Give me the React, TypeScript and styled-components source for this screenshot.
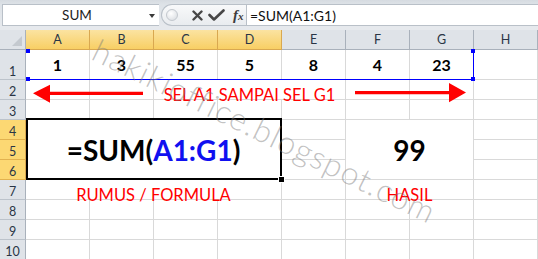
import React from 'react';
import styled, { createGlobalStyle, css } from 'styled-components';

const colunas = ['A', 'B', 'C', 'D', 'E', 'F', 'G', 'H'];
const linhas = [1, 2, 3, 4, 5, 6, 7, 8, 9, 10];
const valoresLinha1 = [1, 3, 55, 5, 8, 4, 23];

type Mesclada = {
  linha: number;
  col: number;
  linhas: number;
  cols: number;
  selecionada?: boolean;
  conteudo: React.ReactNode;
};

// criadas dentro de uma função porque os styled components ficam no fim do arquivo
function criarMescladas(): Mesclada[] {
  return [
    { linha: 2, col: 2, linhas: 1, cols: 3, conteudo: <TextoVermelho>SEL A1 SAMPAI SEL G1</TextoVermelho> },
    {
      linha: 4, col: 0, linhas: 3, cols: 4, selecionada: true,
      conteudo: <TextoGrande>=SUM(<Azul>A1:G1</Azul>)</TextoGrande>,
    },
    { linha: 4, col: 5, linhas: 3, cols: 2, conteudo: <TextoGrande>99</TextoGrande> },
    { linha: 7, col: 0, linhas: 1, cols: 4, conteudo: <TextoVermelho>RUMUS / FORMULA</TextoVermelho> },
    { linha: 7, col: 5, linhas: 1, cols: 2, conteudo: <TextoVermelho>HASIL</TextoVermelho> },
  ];
}

export default function App() {
  const mescladas = criarMescladas();

  function estaMesclada(linha: number, col: number) {
    return mescladas.some(
      (m) => linha >= m.linha && linha < m.linha + m.linhas && col >= m.col && col < m.col + m.cols
    );
  }

  const celulas: React.ReactNode[] = [];
  linhas.forEach((linha) => {
    colunas.forEach((_, col) => {
      if (estaMesclada(linha, col)) return;
      const valor = linha === 1 ? valoresLinha1[col] : undefined;
      celulas.push(
        <Celula key={`${linha}-${col}`} $linha={linha} $col={col}>
          {valor !== undefined && <Numero>{valor}</Numero>}
        </Celula>
      );
    });
  });

  return (
    <>
      <GlobalStyle />
      <Pagina>
        <BarraFormula>
          <CaixaNome>
            <TextoNome>SUM</TextoNome>
            <SetaNome />
          </CaixaNome>
          <Controles>
            <Alca />
            <Icone width="11" height="11" viewBox="0 0 11 11">
              <path d="M1.5 1.5 L9.5 9.5 M9.5 1.5 L1.5 9.5" stroke="#474747" strokeWidth="2.4" strokeLinecap="round" />
            </Icone>
            <Icone width="17" height="12" viewBox="0 0 17 12">
              <path d="M1.5 6 L6 10.5 L15.5 1.5" stroke="#474747" strokeWidth="2.6" fill="none" strokeLinecap="round" strokeLinejoin="round" />
            </Icone>
            <Fx>f<small>x</small></Fx>
          </Controles>
          <EntradaFormula>=SUM(A1:G1)</EntradaFormula>
        </BarraFormula>

        <Planilha>
          <Canto>
            <Triangulo />
          </Canto>
          {colunas.map((c, i) => (
            <CabecalhoColuna key={c} $col={i} $ativo={i < 4}>{c}</CabecalhoColuna>
          ))}
          {linhas.map((l) => (
            <CabecalhoLinha key={l} $linha={l} $ativo={l >= 4 && l <= 6}>{l}</CabecalhoLinha>
          ))}
          {celulas}
          {mescladas.map((m, i) => (
            <Celula
              key={`m${i}`}
              $linha={m.linha}
              $col={m.col}
              $linhas={m.linhas}
              $cols={m.cols}
              $selecionada={m.selecionada}
            >
              {m.conteudo}
            </Celula>
          ))}
        </Planilha>

        <Intervalo>
          <Marcador $v="top" $h="left" />
          <Marcador $v="top" $h="right" />
          <Marcador $v="bottom" $h="left" />
          <Marcador $v="bottom" $h="right" />
        </Intervalo>

        <Setas width="538" height="259" viewBox="0 0 538 259">
          <polygon points="33,93.3 50,84.8 50,91.8 143,91.8 143,95 50,95 50,102.8" fill="#ff0000" />
          <polygon points="355,91 449,91 449,83 466,92.6 449,102.2 449,94.2 355,94.2" fill="#ff0000" />
        </Setas>

        <MarcaDagua>hakikioffice.blogspot.com</MarcaDagua>
      </Pagina>
    </>
  );
}

const GlobalStyle = createGlobalStyle`
  html, body {
    margin: 0;
    padding: 0;
    background: #ffffff;
    overflow: hidden;
  }
  body {
    font-family: 'Lato', 'Open Sans', sans-serif;
  }
`;

const Pagina = styled.div`
  position: relative;
  width: 538px;
  height: 259px;
  overflow: hidden;
`;

const BarraFormula = styled.div`
  box-sizing: border-box;
  height: 30px;
  padding: 4px 0 4px 2px;
  display: flex;
  background: linear-gradient(#d6dbe1 0, #dde2e7 4px, #e6e9ed 26px);
`;

const CaixaNome = styled.div`
  width: 157px;
  box-sizing: border-box;
  display: flex;
  align-items: center;
  background: #ffffff;
  border: 1px solid #b9c0c8;
  border-right: none;
`;

const TextoNome = styled.span`
  flex: 1;
  text-align: center;
  font-family: 'Lato', sans-serif;
  font-size: 13.5px;
  color: #1c1c1c;
  padding-left: 2px;
`;

const SetaNome = styled.span`
  width: 0;
  height: 0;
  margin: 1px 4px 0 0;
  border-left: 3.5px solid transparent;
  border-right: 3.5px solid transparent;
  border-top: 4px solid #3a3a3a;
`;

const Controles = styled.div`
  margin-left: 2px;
  width: 85px;
  box-sizing: border-box;
  display: flex;
  align-items: center;
  background: linear-gradient(#f8f9fa, #e9ecef);
  border: 1px solid #b9c0c8;
  border-right: none;
  border-radius: 11px 0 0 11px;
`;

const Alca = styled.span`
  width: 10px;
  height: 10px;
  margin: 0 14px 0 4px;
  border-radius: 50%;
  border: 1px solid #c3c8ce;
  background: radial-gradient(circle at 40% 35%, #ffffff, #d5d9de);
`;

const Icone = styled.svg`
  display: block;
  margin-right: 5px;
`;

const Fx = styled.span`
  font-family: 'Liberation Serif', 'DejaVu Serif', serif;
  font-style: italic;
  font-weight: bold;
  font-size: 15px;
  color: #3d3d3d;
  margin-left: 3px;
  & small {
    font-size: 11px;
  }
`;

const EntradaFormula = styled.div`
  flex: 1;
  box-sizing: border-box;
  display: flex;
  align-items: center;
  padding-left: 3px;
  background: #ffffff;
  border: 1px solid #b9c0c8;
  border-right: none;
  font-family: 'Lato', sans-serif;
  font-size: 14px;
  color: #111111;
`;

const Planilha = styled.div`
  display: grid;
  grid-template-columns: 26px repeat(7, 64px) 1fr;
  grid-template-rows: 20px 30px repeat(9, 20px);
  width: 538px;
`;

const cabecalhoBase = css`
  box-sizing: border-box;
  display: flex;
  justify-content: center;
  font-family: 'Lato', sans-serif;
  font-size: 12.5px;
  color: #2a3545;
`;

const Canto = styled.div`
  grid-row: 1;
  grid-column: 1;
  position: relative;
  background: #dfe3e8;
  border-right: 1px solid #a9b1bb;
  border-bottom: 1px solid #a9b1bb;
`;

const Triangulo = styled.span`
  position: absolute;
  right: 3px;
  bottom: 3px;
  width: 0;
  height: 0;
  border-left: 10px solid transparent;
  border-bottom: 10px solid #c4c9cf;
`;

const CabecalhoColuna = styled.div<{ $col: number; $ativo: boolean }>`
  ${cabecalhoBase};
  grid-row: 1;
  grid-column: ${(p) => p.$col + 2};
  align-items: center;
  border-right: 1px solid ${(p) => (p.$ativo ? '#d9a850' : '#a9b1bb')};
  border-bottom: 1px solid ${(p) => (p.$ativo ? '#d9a850' : '#a9b1bb')};
  background: ${(p) => (p.$ativo ? 'linear-gradient(#fbe3a1, #f8cf64)' : '#dfe3e8')};
`;

const CabecalhoLinha = styled.div<{ $linha: number; $ativo: boolean }>`
  ${cabecalhoBase};
  grid-column: 1;
  grid-row: ${(p) => p.$linha + 1};
  align-items: flex-end;
  line-height: 15px;
  border-right: 1px solid ${(p) => (p.$ativo ? '#d9a850' : '#a9b1bb')};
  border-bottom: 1px solid ${(p) => (p.$ativo ? '#e2b24f' : '#bcc3cb')};
  background: ${(p) => (p.$ativo ? '#fcd873' : '#dfe3e8')};
`;

const Celula = styled.div<{
  $linha: number;
  $col: number;
  $linhas?: number;
  $cols?: number;
  $selecionada?: boolean;
}>`
  grid-row: ${(p) => p.$linha + 1} / span ${(p) => p.$linhas ?? 1};
  grid-column: ${(p) => p.$col + 2} / span ${(p) => p.$cols ?? 1};
  box-sizing: border-box;
  min-width: 0;
  position: relative;
  display: flex;
  justify-content: center;
  align-items: ${(p) => ((p.$linhas && p.$linhas > 1) || p.$linha === 1 ? 'center' : 'flex-end')};
  border-right: 1px solid #d9d9d9;
  border-bottom: 1px solid #d9d9d9;
  background: #ffffff;

  ${(p) =>
    p.$selecionada &&
    css`
      z-index: 2;
      &::after {
        content: '';
        position: absolute;
        top: -2px;
        left: 0;
        right: -1px;
        bottom: -1px;
        border: 2px solid #000000;
        pointer-events: none;
      }
      &::before {
        content: '';
        position: absolute;
        right: -4px;
        bottom: -4px;
        width: 5px;
        height: 5px;
        background: #000000;
        border: 1px solid #ffffff;
        z-index: 3;
      }
    `}
`;

const Numero = styled.span`
  font-family: 'Lato', sans-serif;
  font-weight: bold;
  font-size: 16px;
  color: #000000;
`;

const TextoGrande = styled.span`
  font-family: 'Lato', sans-serif;
  font-weight: bold;
  font-size: 28px;
  color: #000000;
  white-space: nowrap;
`;

const Azul = styled.span`
  color: #1010f0;
`;

const TextoVermelho = styled.span`
  font-family: 'Lato', sans-serif;
  font-size: 16.5px;
  line-height: 1;
  color: #ff0000;
  white-space: nowrap;
  margin-bottom: -4px;
  position: relative;
  z-index: 1;
`;

const Intervalo = styled.div`
  position: absolute;
  left: 26px;
  top: 49px;
  width: 448px;
  height: 31px;
  box-sizing: border-box;
  border-right: 1px solid #0000ff;
  border-bottom: 1px solid #0000ff;
  pointer-events: none;
`;

const Marcador = styled.span<{ $v: 'top' | 'bottom'; $h: 'left' | 'right' }>`
  position: absolute;
  width: 4px;
  height: 4px;
  background: #0000ff;
  ${(p) => (p.$v === 'top' ? 'top: 0;' : 'bottom: -2px;')}
  ${(p) => (p.$h === 'left' ? 'left: 0;' : 'right: -2px;')}
`;

const Setas = styled.svg`
  position: absolute;
  left: 0;
  top: 0;
  pointer-events: none;
`;

const MarcaDagua = styled.span`
  position: absolute;
  z-index: 10;
  left: 95px;
  top: 32px;
  font-family: 'Lato', sans-serif;
  font-weight: 300;
  font-size: 32px;
  line-height: 32px;
  letter-spacing: 1.2px;
  color: rgba(120, 120, 120, 0.45);
  white-space: nowrap;
  transform: rotate(26deg);
  transform-origin: 0 50%;
  pointer-events: none;
`;
